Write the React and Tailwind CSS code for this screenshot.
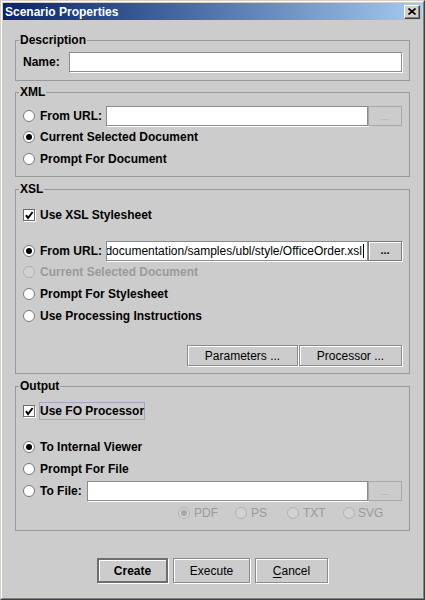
import React from "react";

const Radio = ({ checked, disabled }) => (
  <svg width="12" height="12" viewBox="0 0 12 12" className="flex-none">
    <circle
      cx="6"
      cy="6"
      r="5.5"
      fill={disabled ? "#d2d2d2" : "#fff"}
      stroke={disabled ? "#b0b0b0" : "#787878"}
    />
    {checked && (
      <circle cx="6" cy="6" r="3" fill={disabled ? "#a8a8a8" : "#000"} />
    )}
  </svg>
);

const Checkbox = () => (
  <svg width="13" height="13" viewBox="0 0 13 13" className="flex-none">
    <rect x="0.5" y="0.5" width="11" height="11" fill="#fff" stroke="#6a6a6a" />
    <path d="M12.5 1v11.5H1" stroke="#fff" fill="none" />
    <path d="M3 6.2l2 2.8 4.6-6" stroke="#000" strokeWidth="2" fill="none" />
  </svg>
);

const Field = ({ children, className = "" }) => (
  <div
    className={
      "flex-1 min-w-0 h-[20px] bg-white border border-[#8c8c8c] shadow-[1px_1px_0_#fff] overflow-hidden " +
      className
    }
  >
    {children}
  </div>
);

const DotsButton = ({ disabled }) =>
  disabled ? (
    <div className="w-[34px] h-[20px] flex-none border border-[#a8a8a8] flex items-end justify-center pb-[3px] text-[9px] leading-none text-[#a0a0a0]">
      ...
    </div>
  ) : (
    <div className="w-[34px] h-[20px] flex-none border border-[#7c7c7c] shadow-[inset_1px_1px_0_#fff,1px_1px_0_#fff] flex items-end justify-center pb-[4px] text-[11px] font-bold leading-none text-black">
      ...
    </div>
  );

const RadioRow = ({ label, checked, disabled }) => (
  <div className="flex items-center h-[22px]">
    <Radio checked={checked} disabled={disabled} />
    <span
      className={
        "ml-[5px] font-bold " + (disabled ? "text-[#9a9a9a]" : "text-black")
      }
    >
      {label}
    </span>
  </div>
);

const CheckRow = ({ label, focused }) => (
  <div className="flex items-center h-[22px]">
    <Checkbox />
    <span
      className={
        "ml-[3px] font-bold leading-[16px] border " +
        (focused ? "border-[#a3a3cc]" : "border-transparent")
      }
    >
      {label}
    </span>
  </div>
);

const Group = ({ title, className = "", children }) => (
  <fieldset className={"min-w-0 border border-[#999999] " + className}>
    <legend className="ml-[3px] px-[1px] font-bold leading-[14px]">
      {title}
    </legend>
    {children}
  </fieldset>
);

const Button = ({ children, className = "" }) => (
  <div
    className={
      "flex items-center justify-center border border-[#8c8c8c] shadow-[inset_1px_1px_0_#fff,1px_1px_0_#fff] text-black " +
      className
    }
  >
    {children}
  </div>
);

export default function App() {
  return (
    <div className="w-[425px] h-[600px] border border-[#d4d0c8] border-r-[#404040] border-b-[#404040] font-['Liberation_Sans',Arial,sans-serif] text-[12px] text-black select-none">
      <div className="h-full border border-white border-r-[#808080] border-b-[#808080] bg-[#d4d0c8] p-[1px] flex flex-col">
        {/* title bar */}
        <div className="h-[17px] flex-none flex items-center bg-gradient-to-r from-[#0a246a] to-[#a6caf0] pl-[2px] pr-[2px]">
          <span className="flex-1 text-white font-bold text-[12px] leading-none">
            Scenario Properties
          </span>
          <div className="w-[16px] h-[14px] bg-[#d4d0c8] border border-t-white border-l-white border-r-[#404040] border-b-[#404040] shadow-[inset_-1px_-1px_0_#808080] flex items-center justify-center">
            <svg width="8" height="7" viewBox="0 0 8 7">
              <path
                d="M0.5 0.5l7 6M7.5 0.5l-7 6"
                stroke="#000"
                strokeWidth="1.6"
                fill="none"
              />
            </svg>
          </div>
        </div>

        <div className="flex-1 min-w-0 bg-[#cccccc] px-3 flex flex-col">
          <Group title="Description" className="mt-[13px]">
            <div className="pl-[7px] pr-[7px] pt-[5px] pb-[8px]">
              <div className="flex items-center h-[20px]">
                <span className="w-[46px] flex-none font-bold">Name:</span>
                <Field />
              </div>
            </div>
          </Group>

          <Group title="XML" className="mt-[4px]">
            <div className="pl-[7px] pr-[7px] pt-[7px] pb-[6px]">
              <div className="flex items-center h-[20px]">
                <Radio />
                <span className="ml-[5px] w-[66px] flex-none font-bold">
                  From URL:
                </span>
                <Field />
                <DotsButton disabled />
              </div>
              <RadioRow label="Current Selected Document" checked />
              <RadioRow label="Prompt For Document" />
            </div>
          </Group>

          <Group title="XSL" className="mt-[5px]">
            <div className="pl-[7px] pr-[7px] pt-[8px] pb-[7px]">
              <CheckRow label="Use XSL Stylesheet" />
              <div className="flex items-center h-[20px] mt-[15px]">
                <Radio checked />
                <span className="ml-[5px] w-[66px] flex-none font-bold">
                  From URL:
                </span>
                <Field className="flex justify-end items-center pr-[3px]">
                  <span className="flex-none whitespace-nowrap leading-none">
                    documentation/samples/ubl/style/OfficeOrder.xsl
                  </span>
                  <span className="w-[1px] h-[14px] bg-black flex-none ml-[1px]" />
                </Field>
                <DotsButton />
              </div>
              <RadioRow label="Current Selected Document" disabled />
              <RadioRow label="Prompt For Stylesheet" />
              <RadioRow label="Use Processing Instructions" />
              <div className="flex justify-end gap-[1px] mt-[18px]">
                <Button className="w-[111px] h-[21px]">Parameters ...</Button>
                <Button className="w-[103px] h-[21px]">Processor ...</Button>
              </div>
            </div>
          </Group>

          <Group title="Output" className="mt-[5px]">
            <div className="pl-[7px] pr-[7px] pt-[7px] pb-[6px]">
              <CheckRow label="Use FO Processor" focused />
              <div className="mt-[14px]">
                <RadioRow label="To Internal Viewer" checked />
                <RadioRow label="Prompt For File" />
              </div>
              <div className="flex items-center h-[20px] mt-[1px]">
                <Radio />
                <span className="ml-[5px] w-[47px] flex-none font-bold">
                  To File:
                </span>
                <Field />
                <DotsButton disabled />
              </div>
              <div className="flex items-center h-[22px] mt-[1px] pl-[155px] text-[#9a9a9a]">
                <div className="w-[57px] flex items-center">
                  <Radio checked disabled />
                  <span className="ml-[4px]">PDF</span>
                </div>
                <div className="w-[52px] flex items-center">
                  <Radio disabled />
                  <span className="ml-[4px]">PS</span>
                </div>
                <div className="w-[56px] flex items-center">
                  <Radio disabled />
                  <span className="ml-[4px]">TXT</span>
                </div>
                <div className="flex items-center">
                  <Radio disabled />
                  <span className="ml-[3px]">SVG</span>
                </div>
              </div>
            </div>
          </Group>

          <div className="flex justify-center gap-[5px] mt-[27px]">
            <div className="w-[71px] h-[25px] flex items-center justify-center border-2 border-[#6e6e6e] shadow-[inset_1px_1px_0_#fff,1px_1px_0_#fff] font-bold">
              Create
            </div>
            <Button className="w-[77px] h-[25px]">Execute</Button>
            <Button className="w-[73px] h-[25px]">
              <span className="underline underline-offset-2">C</span>ancel
            </Button>
          </div>
        </div>
      </div>
    </div>
  );
}
